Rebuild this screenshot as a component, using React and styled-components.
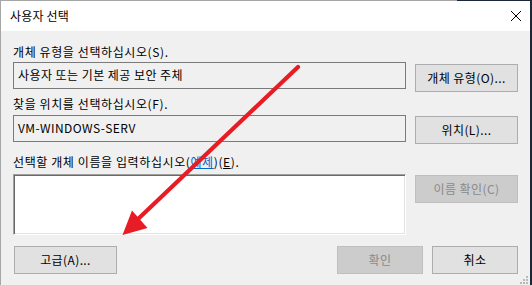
import React from "react";
import styled, { createGlobalStyle } from "styled-components";

const Global = createGlobalStyle`
  html, body { margin: 0; padding: 0; background: #1b2636; }
  body {
    font-family: "Noto Sans CJK KR", "Noto Sans", sans-serif;
    font-size: 12px;
    color: #000;
  }
  #root { width: 532px; height: 285px; }
`;

const Page = styled.div`
  position: relative;
  width: 532px;
  height: 285px;
  overflow: hidden;
`;

const Window = styled.div`
  position: relative;
  box-sizing: border-box;
  width: 530px;
  height: 285px;
  background: #f0f0f0;
  border-style: solid;
  border-width: 1px 0 0 1px;
  border-image: linear-gradient(to right, #a6a6a6 456px, #1b2636 456px) 1;
  display: flex;
  flex-direction: column;
`;

const TitleBar = styled.div`
  height: 30px;
  flex: none;
  background: #fff;
  display: flex;
  align-items: center;
  justify-content: space-between;
  padding: 0 8px 0 9px;
`;

const Title = styled.span`
  font-size: 12px;
  line-height: 16px;
  margin-top: -1px;
  letter-spacing: 0.2px;
`;

const Body = styled.div`
  display: flex;
  flex-direction: column;
  padding: 0 12px;
`;

const Label = styled.div`
  height: 16px;
  line-height: 16px;
  white-space: nowrap;
  letter-spacing: 0.6px;
  margin-top: ${(p) => p.$mt}px;
  margin-bottom: ${(p) => p.$mb}px;
`;

const Link = styled.span`
  color: #0066cc;
  text-decoration: underline;
`;

const Mn = styled.span`
  text-decoration: underline;
`;

const Row = styled.div`
  display: flex;
  gap: 9px;
  align-items: flex-start;
`;

const Field = styled.div`
  box-sizing: border-box;
  width: 393px;
  height: 27px;
  border: 1px solid #7a7a7a;
  background: #f0f0f0;
  padding: 0 0 2px 4px;
  display: flex;
  align-items: center;
  white-space: nowrap;
  letter-spacing: 0.45px;
`;

const TextArea = styled.div`
  box-sizing: border-box;
  width: 393px;
  height: 61px;
  background: #fff;
  border: 1px solid;
  border-color: #a0a0a0 #ffffff #ffffff #a0a0a0;
  box-shadow: inset 1px 1px #696969, inset -1px -1px #e3e3e3;
`;

const Button = styled.div`
  box-sizing: border-box;
  flex: none;
  width: ${(p) => p.$w || 103}px;
  height: 28px;
  margin-top: ${(p) => p.$mt || 0}px;
  margin-left: ${(p) => p.$ml || 0}px;
  background: ${(p) => (p.$disabled ? "#cccccc" : "#e1e1e1")};
  border: 1px solid ${(p) => (p.$disabled ? "#bfbfbf" : "#adadad")};
  color: ${(p) => (p.$disabled ? "#8a8a8a" : "#000")};
  display: flex;
  align-items: center;
  justify-content: center;
  padding-bottom: 2px;
  white-space: nowrap;
  letter-spacing: 0.4px;
`;

const BottomRow = styled.div`
  display: flex;
  align-items: flex-start;
  margin-top: 11px;
`;

const RightButtons = styled.div`
  margin-left: auto;
  display: flex;
  gap: 9px;
`;

const Overlay = styled.svg`
  position: absolute;
  left: 0;
  top: 0;
  pointer-events: none;
`;

const Grip = styled.svg`
  position: absolute;
  left: 519px;
  top: 274px;
`;

const CloseIcon = () => (
  <svg width="12" height="12" viewBox="0 0 12 12">
    <path d="M1 1 L11 11 M11 1 L1 11" stroke="#000" strokeWidth="1" fill="none" />
  </svg>
);

export default function App() {
  return (
    <Page>
      <Global />
      <Window>
        <TitleBar>
          <Title>사용자 선택</Title>
          <CloseIcon />
        </TitleBar>
        <Body>
          <Label $mt={13} $mb={2}>개체 유형을 선택하십시오(S).</Label>
          <Row>
            <Field>사용자 또는 기본 제공 보안 주체</Field>
            <Button $mt={2}>개체 유형(O)...</Button>
          </Row>
          <Label $mt={4} $mb={3}>찾을 위치를 선택하십시오(F).</Label>
          <Row>
            <Field>VM-WINDOWS-SERV</Field>
            <Button $mt={1}>위치(L)...</Button>
          </Row>
          <Label $mt={10} $mb={4}>
            선택할 개체 이름을 입력하십시오(<Link>예제</Link>)(<Mn>E</Mn>).
          </Label>
          <Row>
            <TextArea />
            <Button $mt={1} $disabled>이름 확인(C)</Button>
          </Row>
          <BottomRow>
            <Button $ml={1}>고급(A)...</Button>
            <RightButtons>
              <Button $w={86} $disabled>확인</Button>
              <Button $w={86}>취소</Button>
            </RightButtons>
          </BottomRow>
        </Body>
        <Grip width="10" height="10" viewBox="0 0 10 10">
          <g fill="#b9b9b9">
            <rect x="6" y="1" width="2" height="2" />
            <rect x="3" y="4" width="2" height="2" />
            <rect x="6" y="4" width="2" height="2" />
            <rect x="0" y="7" width="2" height="2" />
            <rect x="3" y="7" width="2" height="2" />
            <rect x="6" y="7" width="2" height="2" />
          </g>
        </Grip>
      </Window>
      <Overlay width="532" height="285" viewBox="0 0 532 285">
        <line x1="298" y1="67" x2="137" y2="220" stroke="#e81c25" strokeWidth="4.2" strokeLinecap="round" />
        <polygon points="122.5,235 132,210.5 147.5,228" fill="#e81c25" />
      </Overlay>
    </Page>
  );
}
